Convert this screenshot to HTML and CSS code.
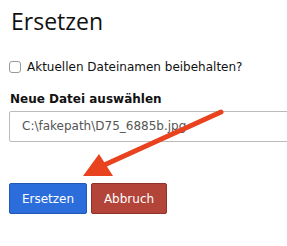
FILE: index.html
```html
<!DOCTYPE html>
<html lang="de">
  <head>
    <meta charset="UTF-8" />
    <meta name="viewport" content="width=device-width, initial-scale=1.0" />
    <title>Ersetzen</title>
    <link rel="stylesheet" href="styles.css">
  </head>
  <body>
    <div class="dialog">
      <h1 class="titel">Ersetzen</h1>
      <label class="check">
        <input type="checkbox" />
        <span>Aktuellen Dateinamen beibehalten?</span>
      </label>
      <div class="feld">
        <label class="feld-label" for="datei">Neue Datei auswählen</label>
        <div class="datei-input" id="datei">C:\fakepath\D75_6885b.jpg</div>
      </div>
      <div class="buttons">
        <button class="btn btn-blau">Ersetzen</button>
        <button class="btn btn-rot">Abbruch</button>
      </div>
    </div>

    <!-- Pfeil als Markierung -->
    <svg class="pfeil" width="287" height="246" viewBox="0 0 287 246">
      <line x1="221" y1="112" x2="102" y2="166" stroke="#e8431e" stroke-width="5" stroke-linecap="round" />
      <polygon points="83,176 99,154 113,176" fill="#e8431e" />
    </svg>
  </body>
</html>
```

FILE: styles.css
```css
body {
  margin: 0;
  background-color: #ffffff;
  font-family: "DejaVu Sans", Verdana, sans-serif;
  color: #111111;
  overflow: hidden;
}

.dialog {
  padding: 6px 0 0 9px;
  overflow: hidden;
}

.titel {
  font-family: "Open Sans", sans-serif;
  font-weight: 400;
  font-size: 23px;
  margin: 0 0 23px 2px;
  line-height: 30px;
}

.check {
  display: flex;
  align-items: center;
  gap: 6px;
  font-size: 12px;
  height: 16px;
}

.check input {
  width: 12px;
  height: 12px;
  margin: 0;
  appearance: none;
  border: 1px solid #999999;
  border-radius: 3px;
  background-color: #ffffff;
}

.feld {
  margin-top: 17px;
}

.feld-label {
  display: block;
  font-weight: bold;
  font-size: 12px;
  margin-left: 1px;
  margin-bottom: 5px;
}

.datei-input {
  width: calc(100% + 20px);
  height: 31px;
  box-sizing: border-box;
  border: 1px solid #bbbbbb;
  border-radius: 2px;
  padding: 0 12px;
  font-size: 12px;
  line-height: 29px;
  color: #555555;
}

.buttons {
  display: flex;
  gap: 4px;
  margin-top: 41px;
}

.btn {
  height: 31px;
  padding: 0 10px;
  font-family: "DejaVu Sans", Verdana, sans-serif;
  font-size: 12px;
  color: #ffffff;
  border-radius: 2px;
  cursor: pointer;
}

.btn-blau {
  width: 78px;
  background-color: #2c6ddc;
  border: 1px solid #2257b3;
}

.btn-rot {
  width: 76px;
  background-color: #b2443a;
  border: 1px solid #8e322a;
}

.pfeil {
  position: absolute;
  left: 0;
  top: 0;
  pointer-events: none;
}
```
